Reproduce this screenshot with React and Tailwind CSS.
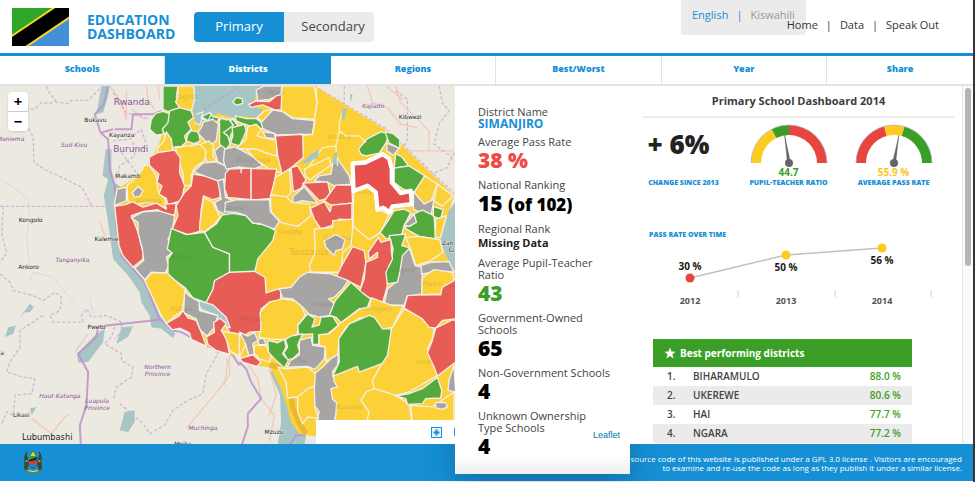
import React from "react";

const COLORS = { g: "#55aa3e", y: "#fcd037", r: "#e75d55", k: "#a6a5a4", w: "#a8c5c6" };

/* District shapes, grouped by map tile. Each tile has its own origin. */
const TILES = [
  {
    x: 0,
    y: 0,
    shapes: [
      ["g", "490,0 535,0 530,35 545,60 530,72 508,78 490,70"],
      ["k", "540,0 565,0 565,12 545,12"],
      ["y", "535,0 583,0 585,40 575,76 540,66 528,48 535,30"],
      ["g", "455,100 468,82 490,76 515,85 510,110 495,125 490,145 470,148 450,130"],
      ["g", "510,75 540,65 575,75 582,95 565,108 575,130 555,150 560,168 545,182 520,184 500,175 497,150 488,130 505,110"],
      ["g", "565,145 575,134 597,138 602,165 585,174 560,165"],
      ["g", "605,92 632,80 640,92 660,96 650,110 625,104"],
      ["g", "665,120 700,100 715,118 695,145 690,165 668,158 660,140"],
      ["k", "605,125 612,108 640,100 657,115 650,165 632,178 612,160 594,140"],
      ["y", "598,178 628,165 642,178 640,210 652,225 625,230 612,205"],
      ["y", "500,138 515,160 520,195 495,198 470,205 475,185 493,165"],
      ["y", "528,185 600,175 620,195 615,225 585,245 575,270 575,300 552,298 550,260 532,215"],
      ["y", "382,300 412,272 425,255 435,238 450,240 470,270 475,315 497,340 498,368 475,355 440,350 400,358 384,345"],
      ["k", "352,310 380,305 380,345 343,360"],
      ["k", "398,320 415,302 430,315 420,332 403,334"],
      ["r", "448,215 475,200 525,193 542,215 540,260 555,300 545,345 505,357 500,338 478,325 487,300 472,290 478,265 450,240"],
      ["r", "345,362 380,356 398,348 430,364 470,352 500,370 497,355 530,353 525,388 500,387 475,372 430,378 395,390 415,440 430,500 430,520 400,545 370,510 358,480"],
      ["k", "395,397 430,378 475,375 525,390 517,440 505,460 520,500 500,515 507,540 497,562 455,560 435,582 405,548 432,525 428,490 415,440 415,410"],
      ["r", "580,265 640,275 660,290 662,335 640,342 612,330 605,370 600,437 565,447 518,430 535,390 530,360 555,320 575,300"],
      ["k", "583,257 610,232 650,228 690,245 683,278 655,285 600,265"],
      ["k", "645,195 665,178 700,185 720,200 720,260 690,245 655,228"],
      ["k", "655,285 672,280 678,335 712,350 722,400 680,388 655,375 645,350 665,340"],
      ["y", "602,405 612,335 640,350 662,395 645,415 615,438 600,435"],
      ["g", "515,428 560,447 615,440 640,482 690,505 690,560 645,587 640,612 620,652 580,637 555,605 505,570 505,520 518,502 503,490"],
      ["g", "615,440 650,415 668,388 700,383 740,390 760,412 800,418 828,435 820,465 775,520 765,563 690,562 690,505 640,485"],
    ],
  },
  {
    x: 660,
    y: 0,
    shapes: [
      ["k", "110,12 135,0 187,0 185,25 150,40 115,44"],
      ["r", "88,55 110,45 150,47 170,30 188,25 187,72 165,72 130,57 95,64"],
      ["y", "113,95 135,75 160,70 152,100 130,108"],
      ["g", "40,48 50,35 68,38 70,52 50,58"],
      ["g", "48,90 80,98 110,98 132,115 132,130 100,122 75,115 50,105"],
      ["g", "0,98 28,100 42,118 12,140 25,150 32,175 20,190 0,175"],
      ["g", "38,125 75,115 80,135 72,155 60,180 33,172 40,150"],
      ["y", "188,0 285,0 293,50 285,100 220,95 185,75"],
      ["k", "125,110 160,72 190,77 220,98 287,104 280,145 172,147 130,128"],
      ["k", "130,138 165,142 168,158 140,155"],
      ["y", "85,122 110,115 125,130 112,150 150,160 172,165 172,212 150,205 110,190 50,188 80,160"],
      ["k", "15,190 45,183 70,195 105,215 130,240 100,250 60,243 20,250 12,225"],
      ["y", "80,190 110,190 150,205 178,212 188,262 150,250 110,222"],
      ["r", "168,150 250,145 252,215 210,250 188,265 175,210"],
      ["r", "18,262 30,250 95,247 95,342 25,335 15,310"],
      ["r", "95,248 172,250 168,272 155,338 95,343"],
      ["y", "168,275 210,250 215,320 200,337 155,325"],
      ["r", "215,245 235,240 260,282 245,308 222,318"],
      ["y", "255,250 330,215 335,238 272,282 258,270"],
      ["k", "355,218 390,270 395,295 345,300 325,290 285,285 300,270 335,265 340,235"],
      ["r", "250,292 325,288 332,320 325,338 300,345 288,332"],
      ["r", "350,298 398,297 400,352 335,358 315,345"],
      ["r", "273,368 315,348 332,378 338,358 398,352 398,402 360,400 340,418 305,430 285,400"],
      ["k", "220,333 255,303 295,352 250,345 222,352"],
      ["y", "153,328 200,332 218,350 270,355 275,390 235,422 185,410 155,378"],
      ["k", "18,350 50,342 150,342 153,378 180,407 165,430 125,415 100,412 80,390 50,380 15,378"],
      ["y", "285,430 340,425 340,405 400,400 400,430 395,480 370,500 365,560 275,560 270,540 288,500"],
      ["k", "315,465 350,447 377,462 370,490 350,495 345,510 320,485"],
      ["y", "403,320 445,303 465,318 475,372 510,385 485,440 450,462 402,422"],
      ["g", "418,190 445,158 485,138 510,143 500,172 480,202 440,210 425,205"],
      ["g", "498,138 520,142 542,160 542,188 510,172"],
      ["k", "503,172 540,187 522,208 503,195"],
      ["g", "530,203 550,215 568,240 525,247"],
      ["g", "525,247 570,240 617,270 590,320 555,312 525,290"],
      ["y", "617,270 655,295 645,320 635,350 615,357 585,320"],
      ["y", "655,295 702,330 670,362 645,345"],
      ["k", "583,318 615,355 645,340 635,395 583,370"],
      ["g", "510,400 525,375 555,370 575,380 555,420 545,457 500,458 483,440"],
      ["g", "572,390 610,373 645,390 650,460 600,452 553,425 575,420"],
      ["g", "643,362 672,372 665,400 643,392"],
      ["k", "555,418 585,385 592,410 570,422"],
      ["y", "650,400 682,390 665,455 648,455"],
      ["y", "560,455 600,452 662,462 672,500 635,525 590,540 578,500"],
      ["k", "545,492 572,490 588,540 610,545 608,625 565,632 555,660 495,658 505,610 530,590"],
      ["g", "510,450 560,445 548,480 572,487 550,510 542,560 535,590 505,595 492,562 515,530 522,490"],
      ["r", "400,483 435,495 440,530 435,560 425,605 385,585 350,575 370,535"],
      ["r", "478,455 485,470 515,462 517,500 520,520 500,560 505,600 490,652 450,637 420,620 435,580 440,530 475,515 475,500 450,520 447,500"],
      ["k", "605,540 635,530 690,528 705,560 640,560 608,565"],
    ],
  },
  {
    x: 660,
    y: 540,
    shapes: [
      ["r", "-15,45 30,20 105,17 137,35 140,82 185,68 183,103 150,110 125,130 125,198 90,200 75,210 30,200 5,155 -40,110 -20,72"],
      ["r", "-15,160 5,190 12,215 25,240 30,270 -10,255"],
      ["y", "5,197 50,205 72,212 78,240 60,274 40,262 20,235"],
      ["k", "60,200 85,212 105,200 115,225 100,235 105,268 88,270 78,235"],
      ["r", "60,280 100,268 125,290 112,303 70,290"],
      ["y", "105,240 140,240 157,270 150,290 120,280 103,262"],
      ["k", "115,222 132,218 140,238 118,238"],
      ["y", "122,140 150,110 190,100 240,108 258,150 235,180 235,205 200,222 160,222 118,215 125,190"],
      ["k", "180,70 215,65 240,35 265,20 335,25 387,45 370,70 345,95 328,100 347,115 332,150 300,155 270,147 250,125 220,100 190,97"],
      ["g", "395,50 430,82 454,100 445,125 420,130 365,172 350,155 330,150 348,105"],
      ["g", "265,145 287,160 278,185 300,178 305,155 340,152 357,180 325,205 300,210 298,237 280,237 280,205 238,208 235,180"],
      ["g", "145,225 175,232 195,222 200,245 190,265 207,285 195,308 165,280 147,260"],
      ["g", "215,212 250,205 235,240 242,260 220,280 205,283 193,262 205,245 198,222"],
      ["k", "240,225 275,215 280,240 318,245 315,280 298,300 285,312 265,303 203,305 215,285 240,268"],
      ["y", "298,208 330,205 365,172 420,132 450,125 457,97 520,120 553,120 520,185 490,192 465,155 420,158 380,185 360,220 355,268 320,288 318,245 300,240"],
      ["k", "335,280 358,266 355,300 340,318 345,350 355,365 335,370 340,402 352,412 350,445 345,470 290,470 300,440 285,420 285,325 310,305"],
      ["g", "450,150 466,156 490,190 517,190 512,250 500,290 420,320 415,303 340,333 360,290 358,220 390,175"],
      ["y", "555,130 605,155 645,190 640,220 625,250 655,330 570,380 530,390 465,372 460,345 485,300 505,270 517,190"],
      ["y", "465,370 530,390 570,418 580,480 440,480 450,440 425,405 440,380"],
      ["y", "575,420 640,425 705,380 705,480 580,480"],
      ["g", "528,392 570,385 610,370 655,336 668,375 665,398 620,400 610,415 565,417 560,400"],
      ["r", "565,90 615,87 665,88 665,65 710,40 710,160 670,165 650,188 630,185 610,160 555,128"],
      ["r", "650,188 700,163 710,165 710,290 655,332 645,305 625,262 640,225"],
      ["y", "610,35 645,12 700,20 705,45 670,65 665,85 608,88"],
      ["k", "705,300 690,345 687,375 710,380"],
      ["k", "650,412 680,412 685,425 670,432 650,428"],
      ["y", "175,305 195,310 265,305 288,325 285,370 235,395 205,398 200,350"],
      ["y", "235,395 265,370 285,362 287,430 298,460 265,455 250,475 235,440"],
    ],
  },
  {
    x: 0,
    y: 540,
    shapes: [
      ["w", "590,102 640,118 680,155 692,187 670,180 640,145 605,132"],
      ["y", "435,45 455,22 502,22 557,72 555,100 545,140 520,155 500,175 480,140"],
      ["k", "555,78 570,92 598,108 600,135 655,150 645,185 622,212 600,192 590,160 552,142"],
      ["r", "500,174 538,152 550,135 565,157 590,165 605,200 620,242 575,222 570,202 540,188 518,193"],
      ["r", "620,215 645,200 642,172 662,158 680,175 665,195 680,215 690,267 650,255 625,237"],
      ["y", "668,198 700,203 720,205 720,272 690,255 682,225"],
    ],
  },
];

const COUNTRY =
  "490,0 945,0 1160,132 1365,328 1345,390 1322,470 1345,520 1368,560 1368,1080 925,1050 900,1045 875,1010 865,970 845,910 812,845 770,842 720,815 660,800 620,780 570,740 500,715 435,585 400,545 360,500 343,360 350,310 385,290 445,235 480,170 490,130 455,130 455,100 490,75";

const ADMIN_BORDERS = [
  "M140,0 l10,25 l18,18 l-15,8 l-30,0 l-20,20 l-20,-5 M165,48 l40,5 l10,-10 l50,0 l35,-35",
  "M85,65 l-5,50 l20,40 l2,75 l40,25 l45,20 l60,30 l15,30 l15,28",
  "M0,362 H345 M10,362 l-5,80 l15,60 l-20,30",
  "M0,565 l30,25 l10,25 l60,15 l30,15 l35,-25 l20,15 l-5,40 l-30,15 l10,20 l90,0 l-5,-20 l15,-20 l15,25 l45,-5 l45,20 l0,30 l-20,20",
  "M130,690 l-70,45 l0,50 l-30,45 l-10,30 l50,15 l35,5 l-10,45 l-50,5 l-5,60 l-20,-10 l-15,35",
  "M345,725 l-10,30 l-20,20 l50,30 l0,20 l35,20 l-5,30 l-45,30 l-10,40",
  "M360,955 l35,30 l35,30 l20,30 l45,-25 l25,-45 l45,-30 l45,-20 l10,-60 l35,-60 l-15,-50",
  "M340,165 l50,-5 l35,-30 l15,45 M350,280 l10,-40 l45,-30 l-5,-40 M365,200 l45,60 M340,20 l40,60 l70,20",
  "M1035,0 l0,60 M1190,15 l35,25 l0,120 l-30,60 M1320,0 l10,50 l20,25 l-30,40 l-15,60 l55,40 M1365,200 l-20,45 l-60,25",
  "M945,0 L1160,128 L1365,322",
];

const NATIONAL_BORDERS = [
  "M325,0 L312,55 L285,85 L302,140 L325,160 L330,255 L345,300 L350,420 L365,510 L435,590 L480,700 L520,735 L545,740 L620,780 L700,810 L720,840",
  "M345,130 l50,0 l5,-45 l60,0 l25,-10 M305,140 l35,-10",
  "M480,703 L320,720 L295,725 L290,755 L235,805 L265,860 L260,960 L240,1020 L243,1080",
  "M720,830 l20,20 l15,40 l30,50 l-40,45 l0,40 l-20,60 M870,1080 l20,-30 l30,0",
];

const ROADS = [
  "M330,0 l30,40 l20,60 M380,15 l0,90 M395,70 l40,30 M440,0 l5,40 l20,30 M475,0 l5,40 M300,405 l15,45",
  "M1105,0 l15,50 l45,15 l40,50 l50,10 M1190,0 l15,50 l85,85 l0,60 l-90,0 M1290,195 l75,0 M1160,0 l50,40",
  "M95,1000 l60,45 l40,-50 l15,-10 M265,745 l-40,55 M690,810 l0,60 l-30,40 l-50,60 l-50,60 M680,820 l10,20",
  "M735,820 l40,60 l10,60 l40,50 l-15,80 M810,850 l20,80 l-20,60 M685,820 l-10,80",
];

const WATER = [
  "583,0 850,0 770,20 765,45 745,55 790,72 775,95 730,92 700,95 655,82 610,105 592,125 580,75",
  "305,0 330,0 325,30 310,80 290,85 298,40",
  "318,190 335,190 335,250 345,290 372,310 345,350 358,480 405,550 435,585 480,690 527,745 520,758 485,730 455,725 450,690 425,650 420,620 385,570 340,520 325,410 312,330 325,280 308,270",
  "290,745 315,730 310,770 265,830 235,832 232,805",
  "365,725 400,722 385,755 350,775",
  "375,980 405,975 405,1010 385,1040 360,1035",
  "25,725 48,720 40,745 15,755",
  "90,655 102,665 90,680 75,680 60,695",
  "90,970 110,965 95,990",
  "810,855 840,865 865,915 870,990 900,1040 920,1055 915,1080 835,1080 845,1010 842,930",
  "1368,350 1345,380 1328,420 1325,470 1345,520 1368,560",
  "1052,25 1060,25 1055,50",
];

const INNER_WATER = [
  "905,232 930,210 960,190 955,215 920,232",
  "1030,65 1042,68 1036,100 1027,100",
  "1005,205 1014,195 1012,232 1000,232",
];

const PLACES = [
  [287, 108, "Bukavu"], [366, 152, "Kayanza"], [384, 278, "Makamb"], [92, 408, "Kongolo"],
  [320, 467, "Kalemie"], [86, 551, "Ankoro"], [290, 731, "Pweto"], [64, 995, "Likasi"],
  [824, 1045, "Mzuzu"], [550, 1083, "Mpika"], [1233, 98, "Kibwezi"], [6, 808, "a"],
];
const REGIONS = [
  [32, 164, "Maniema"], [223, 182, "Sud-Kivu"], [218, 529, "Tanganyika"], [474, 850, "Northern"],
  [474, 872, "Province"], [180, 938, "Haut-Katanga"], [292, 952, "Luapula"], [292, 974, "Province"],
  [610, 1033, "Muchinga"], [1122, 65, "Kajiado"],
];
const FAINT = [
  [448, 352, "Kigoma"], [545, 521, "Katavi"], [546, 676, "Rukwa"], [760, 228, "Shinyanga"],
  [700, 372, "Tabora"], [872, 446, "Singida"], [1020, 160, "Arusha"], [1015, 462, "Dodoma"],
  [1200, 560, "Morogoro"], [755, 706, "Mbeya"], [970, 660, "Iringa"], [1130, 675, "Morogoro"],
  [1050, 970, "Ruvuma"], [1275, 837, "Lindi"], [1300, 600, "Pwani"], [885, 833, "Njombe"],
  [830, 26, "Mara"], [560, 40, "Kagera"], [1110, 325, "Manyara"],
];

function DistrictMap() {
  return (
    <svg viewBox="0 0 1368 1080" preserveAspectRatio="xMinYMin slice" className="block h-full w-full font-['DejaVu_Sans',sans-serif]" role="img" aria-label="Map of districts">
      <rect width="2600" height="2000" fill="#ece9e1" />
      {WATER.map((p) => <polygon key={p} points={p} fill={COLORS.w} />)}
      <g fill="none" strokeLinejoin="round">
        {ROADS.map((d) => <path key={d} d={d} stroke="#f3c9b8" strokeWidth="4" />)}
        {ADMIN_BORDERS.map((d) => <path key={d} d={d} stroke="#d9b3d6" strokeWidth="4" strokeDasharray="10 6" />)}
        <path d="M0,280 l40,25 l45,35 l5,55 l-10,60 l10,90 M90,590 l10,-30 l60,15 l40,50 l30,30 M270,640 l15,60" stroke="#d3deda" strokeWidth="3" />
        {NATIONAL_BORDERS.map((d) => <path key={d} d={d} stroke="#c08fc9" strokeWidth="6" opacity="0.85" />)}
      </g>
      <polygon points={COUNTRY} fill={COLORS.y} />
      <polygon points={WATER[0]} fill={COLORS.w} />
      <path d="M600,80 l120,-80" fill="none" stroke="#b9a3c9" strokeWidth="4" strokeDasharray="10 6" />
      <path d="M810,840 l35,5 l25,40 l10,80 l20,50 l20,30" fill="none" stroke="#e6b92f" strokeWidth="16" />
      {TILES.map((t) => (
        <g key={`${t.x}-${t.y}`} transform={`translate(${t.x} ${t.y})`} stroke="#f4f0ea" strokeWidth="4" strokeLinejoin="round">
          {t.shapes.map(([c, p]) => <polygon key={p} points={p} fill={COLORS[c]} />)}
        </g>
      ))}
      <path d="M950,5 L953,50 L945,100 L940,145 L912,148 M1035,65 l-15,45 l0,25 l20,15 l40,0 l20,20 M1020,135 l-10,45 l-40,5 l-40,55 M1010,180 l5,60 M725,262 l0,-15" fill="none" stroke="#fdf3cf" strokeWidth="4" />
      <path d="M590,85 l20,-8 l-5,20 l20,8 l10,-20 l10,10 M585,110 l15,8 l8,-22 M665,90 l15,12 l20,-5 l15,15 M575,185 q5,-15 20,-15" fill="none" stroke="#e3efe9" strokeWidth="4" />
      {INNER_WATER.map((p) => <polygon key={p} points={p} fill={COLORS.w} />)}
      <g fill="#333" opacity="0.16" textAnchor="middle" fontSize="20">
        {FAINT.map(([x, y, t]) => <text key={`${t}${x}`} x={x} y={y}>{t}</text>)}
        <text x="928" y="508" fontSize="27">Tanzania</text>
      </g>
      <polygon
        points="1060,233 1098,230 1150,205 1170,218 1178,250 1178,290 1205,322 1235,315 1238,355 1180,362 1172,380 1152,366 1135,372 1130,320 1105,300 1063,316"
        fill="#e5504c" stroke="#fff" strokeWidth="13" strokeLinejoin="round"
      />
      <g fill="#222" textAnchor="middle" fontSize="18" stroke="#f5f2ec" strokeWidth="2" paintOrder="stroke">
        {PLACES.map(([x, y, t]) => <text key={t} x={x} y={y}>{t}</text>)}
        <text x="142" y="1065" fontSize="25">Lubumbashi</text>
        <text x="1346" y="477">Zan</text>
        <text x="1357" y="499">Ci</text>
      </g>
      <g fill="#8a559a" textAnchor="middle" fontSize="18">
        <g fontStyle="italic">{REGIONS.map(([x, y, t]) => <text key={`${t}${x}`} x={x} y={y}>{t}</text>)}</g>
        <text x="396" y="56" fontSize="27">Rwanda</text>
        <text x="393" y="198" fontSize="27">Burundi</text>
      </g>
    </svg>
  );
}

function Flag() {
  return (
    <svg viewBox="0 0 57 38" className="h-[38px] w-[57px] shrink-0" aria-label="Flag of Tanzania">
      <rect width="57" height="38" fill="#000" />
      <path d="M0,0 H41 L0,27.500 Z" fill="#2fa82a" />
      <path d="M57,10 V38 H15 Z" fill="#4190d8" />
      <path d="M-1,28.500 L43,-1 M13,39.500 L58,9" stroke="#f6d722" strokeWidth="2" />
    </svg>
  );
}

function CoatOfArms() {
  return (
    <svg viewBox="0 0 20 23" className="h-[23px] w-5" aria-label="Coat of arms">
      <path d="M3,2 Q0.500,5 1.500,10 L1,18 L4,21 L6,13 L5,8 Z" fill="#3b4a2e" />
      <path d="M17,2 Q19.500,5 18.500,10 L19,18 L16,21 L14,13 L15,8 Z" fill="#3b4a2e" />
      <path d="M4,1 q-3,3 0,6 M16,1 q3,3 0,6" stroke="#2f3b2a" strokeWidth="1" fill="none" />
      <path d="M6,5 L10,0 L14,5 L14,13 Q13,17 10,18 Q7,17 6,13 Z" fill="#2c6f3a" />
      <path d="M7,5 L10,0.500 L13,5 Z" fill="#e9cf2f" />
      <path d="M6,5 h8 v2 L6,10 Z" fill="#2f9e45" />
      <path d="M6,9 L14,6 V8 L6,11 Z" fill="#222" />
      <path d="M6,10 h8 v3 h-8 Z" fill="#d93a35" />
      <path d="M6.500,13 h7 l-1,3 h-5 Z" fill="#3f78c9" />
      <circle cx="3.500" cy="10" r="1" fill="#cf9a6a" />
      <circle cx="16.500" cy="10" r="1" fill="#cf9a6a" />
      <path d="M2,18 Q10,22 18,18 L17,21 Q10,24 3,21 Z" fill="#5f8a3c" />
      <path d="M5,19.500 Q10,21.500 15,19.500" stroke="#e8e2c8" strokeWidth="1" fill="none" />
    </svg>
  );
}

const arcPoint = (deg, r) => {
  const a = (deg * Math.PI) / 180;
  return `${(39 - r * Math.cos(a)).toFixed(2)},${(39 - r * Math.sin(a)).toFixed(2)}`;
};

function Gauge({ stops, needle, value, label, valueClass }) {
  return (
    <div className="flex flex-col items-center">
      <svg viewBox="0 0 78 44" className="h-11 w-[78px]" aria-hidden="true">
        {stops.map(([from, to, color]) => (
          <path key={from} fill={color} d={`M${arcPoint(from, 38)} A38,38 0 0 1 ${arcPoint(to, 38)} L${arcPoint(to, 28)} A28,28 0 0 0 ${arcPoint(from, 28)} Z`} />
        ))}
        <path d="M1,39 A38,38 0 0 1 77,39" fill="none" stroke="#a9b4c4" strokeWidth="0.7" />
        <path d={`M37.500,39 L${arcPoint(needle, 28)} L40.500,39 Z`} fill="#646464" stroke="#646464" strokeWidth="0.5" />
        <circle cx="39" cy="39" r="4" fill="#646464" />
      </svg>
      <span className={`text-[10px] font-bold leading-[9px] ${valueClass}`}>{value}</span>
      <span className="mt-0.5 text-[7px] font-extrabold leading-[8px] text-[#168fd5]">{label}</span>
    </div>
  );
}

function TrendChart() {
  const points = [
    [47, 43, "#e8453f", "2012", "30 %", 35],
    [143, 20, "#ffc91f", "2013", "50 %", 36],
    [239, 13, "#ffc91f", "2014", "56 %", 29],
  ];
  return (
    <svg viewBox="0 0 311 76" className="block h-[76px] w-[311px]" role="img" aria-label="Pass rate over time">
      <polyline points="47,43 143,20 239,13" fill="none" stroke="#c0c0c0" strokeWidth="1.500" />
      {[95, 192, 288].map((x) => <path key={x} d={`M${x},55 v7`} stroke="#c0d0e0" strokeWidth="1" />)}
      {points.map(([x, y, c, year, v, ly]) => (
        <g key={year} textAnchor="middle">
          <circle cx={x} cy={y} r="4.500" fill={c} />
          <text x={x} y={ly} fontSize="10" fontWeight="700" fill="#1a1a1a">{v}</text>
          <text x={x} y="69" fontSize="9" fontWeight="700" fill="#555">{year}</text>
        </g>
      ))}
    </svg>
  );
}

function Fact({ label, children, valueClass }) {
  return (
    <div className="mb-1.5">
      <dt className="text-[11px] leading-[12px] text-[#444]">{label}</dt>
      <dd className={valueClass}>{children}</dd>
    </div>
  );
}

const TABS = ["Schools", "Districts", "Regions", "Best/Worst", "Year", "Share"];
const BEST = [
  ["BIHARAMULO", "88.0 %"],
  ["UKEREWE", "80.6 %"],
  ["HAI", "77.7 %"],
  ["NGARA", "77.2 %"],
];
const BIG = "text-[21px] font-extrabold leading-[25px]";

export default function App() {
  return (
    <div className="flex h-screen flex-col overflow-hidden border-r-2 border-[#3a3338] bg-white pb-px font-['Open_Sans',sans-serif] text-[#444]">
      <header className="relative z-20 flex h-[56px] shrink-0 items-start border-b-[3px] border-[#168fd5] bg-white pl-3 pr-[34px] pt-2">
        <Flag />
        <h1 className="ml-[18px] mt-[5px] w-[107px] text-[14px] font-bold leading-[14px] text-[#168fd5]">EDUCATION DASHBOARD</h1>
        <div className="mt-1 flex h-[30px] overflow-hidden rounded text-[13px]">
          <button className="w-[90px] bg-[#168fd5] text-white">Primary</button>
          <button className="w-[90px] bg-[#ebebeb] pl-2 text-[#444]">Secondary</button>
        </div>
        <div className="absolute right-[167px] top-0 flex h-[35px] w-[125px] gap-2 rounded-b bg-[#ebebeb] pl-[11px] pt-2 text-[11px] leading-[13px]">
          <a href="#en" className="text-[#168fd5]">English</a>
          <span className="text-[#168fd5]">|</span>
          <a href="#sw" className="text-[#999]">Kiswahili</a>
        </div>
        <nav className="relative ml-auto mt-2.5 flex gap-2 text-[11px] leading-[13px] text-[#333]">
          <a href="#home">Home</a>
          <span>|</span>
          <a href="#data">Data</a>
          <span>|</span>
          <a href="#speak">Speak Out</a>
        </nav>
      </header>

      <nav className="relative z-20 flex h-[30px] shrink-0 border-b-2 border-[#e3e3e3] bg-white text-[9px] font-extrabold leading-[26px]">
        {TABS.map((t, i) => (
          <a
            key={t}
            href={`#${t}`}
            className={
              t === "Districts"
                ? "w-[17%] bg-[#168fd5] text-center text-white"
                : i === 5
                  ? "flex-1 text-center text-[#168fd5]"
                  : "w-[17%] border-r border-[#e3e3e3] text-center text-[#168fd5]"
            }
          >
            {t}
          </a>
        ))}
      </nav>

      <main className="relative flex min-h-0 flex-1">
        <section className="relative z-10 min-w-0 flex-1 overflow-hidden">
          <DistrictMap />
          <div className="absolute left-2 top-1.5 flex w-5 flex-col overflow-hidden rounded bg-white text-center text-[15px] font-bold leading-[19px] text-black shadow">
            <button className="h-5 border-b border-[#ccc]" aria-label="Zoom in">+</button>
            <button className="h-[19px]" aria-label="Zoom out">−</button>
          </div>
          <div className="absolute bottom-0 right-0 flex h-6 w-[139px] items-center justify-end gap-3 bg-white">
            <svg viewBox="0 0 11 11" className="h-[11px] w-[11px]" aria-hidden="true">
              <rect x="0.500" y="0.500" width="10" height="10" fill="#e6f3fb" stroke="#168fd5" />
              <path d="M5.500,2.500 V8.500 M2.500,5.500 H8.500" stroke="#168fd5" strokeWidth="2" />
            </svg>
            <span className="h-2 w-px bg-[#168fd5]" />
          </div>
        </section>

        <aside className="-mb-[30px] flex w-[175px] shrink-0 flex-col bg-linear-to-b from-white from-95% to-[#eee] pl-[23px] pr-2.5 pt-5 shadow-[0_14px_30px_0_rgba(0,0,0,0.2)]">
          <dl>
            <Fact label="District Name" valueClass="text-[12px] font-bold leading-[12px] text-[#168fd5]">SIMANJIRO</Fact>
            <Fact label="Average Pass Rate" valueClass={`${BIG} text-[#f24a43]`}>38 %</Fact>
            <Fact label="National Ranking" valueClass={`${BIG} text-black`}>15 <span className="text-[17px]">(of 102)</span></Fact>
            <Fact label="Regional Rank" valueClass="text-[11px] font-bold leading-[16px] text-[#222]">Missing Data</Fact>
            <Fact label="Average Pupil-Teacher Ratio" valueClass={`${BIG} text-[#3b9f27]`}>43</Fact>
            <Fact label="Government-Owned Schools" valueClass={`${BIG} text-black`}>65</Fact>
            <Fact label="Non-Government Schools" valueClass={`${BIG} text-black`}>4</Fact>
            <div className="flex items-start justify-between">
              <div className="w-[112px]">
                <Fact label="Unknown Ownership Type Schools" valueClass={`${BIG} text-black`}>4</Fact>
              </div>
              <a href="#leaflet" className="mt-5 font-['Liberation_Sans',sans-serif] text-[9px] leading-[10px] text-[#0078a8]">Leaflet</a>
            </div>
          </dl>
        </aside>

        <section className="relative z-10 flex w-[343px] shrink-0 overflow-hidden bg-white">
          <div className="min-w-0 flex-1 overflow-hidden pl-[13px] pr-2">
            <h2 className="border-b-2 border-[#ececec] pb-2 pt-[7px] text-center text-[11px] font-bold leading-[15px] text-[#3d3d3d]">Primary School Dashboard 2014</h2>
            <div className="-ml-3 mt-1.5 grid w-[315px] grid-cols-3">
              <div className="flex flex-col items-center">
                <span className="flex h-[53px] items-start pr-2.5 pt-1.5 text-[26px] font-extrabold leading-[28px] text-[#222]">+ 6%</span>
                <span className="mt-0.5 text-[7px] font-extrabold leading-[8px] text-[#168fd5]">CHANGE SINCE 2013</span>
              </div>
              <Gauge stops={[[0, 63, "#ffcb23"], [63, 90, "#3b9f27"], [90, 180, "#e8453f"]]} needle={81} value="44.7" label="PUPIL-TEACHER RATIO" valueClass="text-[#3b9f27]" />
              <Gauge stops={[[0, 75, "#e8453f"], [75, 106, "#ffcb23"], [106, 180, "#3b9f27"]]} needle={100} value="55.9 %" label="AVERAGE PASS RATE" valueClass="text-[#fcc520]" />
            </div>
            <h3 className="ml-1.5 mt-11 text-[7px] font-extrabold leading-[8px] text-[#168fd5]">PASS RATE OVER TIME</h3>
            <div className="-mt-1">
              <TrendChart />
            </div>
            <table className="ml-2.5 mt-7 w-[259px] border-collapse text-[10px] font-semibold">
              <thead>
                <tr className="h-7 bg-[#3b9f27] text-left text-white">
                  <th colSpan="3" className="pl-[11px] font-bold">
                    <span className="flex items-center gap-1">
                      <svg viewBox="0 0 24 24" className="h-3 w-3" fill="currentColor" aria-hidden="true">
                        <path d="M12,1 L15,9 L23.500,9.300 L16.800,14.500 L19.200,23 L12,18 L4.800,23 L7.200,14.500 L0.500,9.300 L9,9 Z" />
                      </svg>
                      Best performing districts
                    </span>
                  </th>
                </tr>
              </thead>
              <tbody>
                {BEST.map(([name, rate], i) => (
                  <tr key={name} className={i % 2 ? "h-[19px] bg-[#ebebeb]" : "h-[19px]"}>
                    <td className="w-10 pl-3.5">{i + 1}.</td>
                    <td>{name}</td>
                    <td className="pr-[11px] text-right text-[#3b9f27]">{rate}</td>
                  </tr>
                ))}
              </tbody>
            </table>
          </div>
          <div className="flex w-[11px] shrink-0 justify-center border-l border-[#e5e5e5] bg-[#fafafa] pt-0.5">
            <div className="h-1/2 w-1.5 rounded-full bg-[#b5b5b5]" />
          </div>
        </section>
      </main>

      <footer className="flex h-[37px] shrink-0 items-center justify-between bg-[#168fd5] pl-[23px] pr-[11px] text-[8px] font-medium leading-[9px] text-white">
        <CoatOfArms />
        <p className="text-right">
          source code of this website is published under a GPL 3.0 license . Visitors are encouraged
          <br />
          to examine and re-use the code as long as they publish it under a similar license.
        </p>
      </footer>
    </div>
  );
}
